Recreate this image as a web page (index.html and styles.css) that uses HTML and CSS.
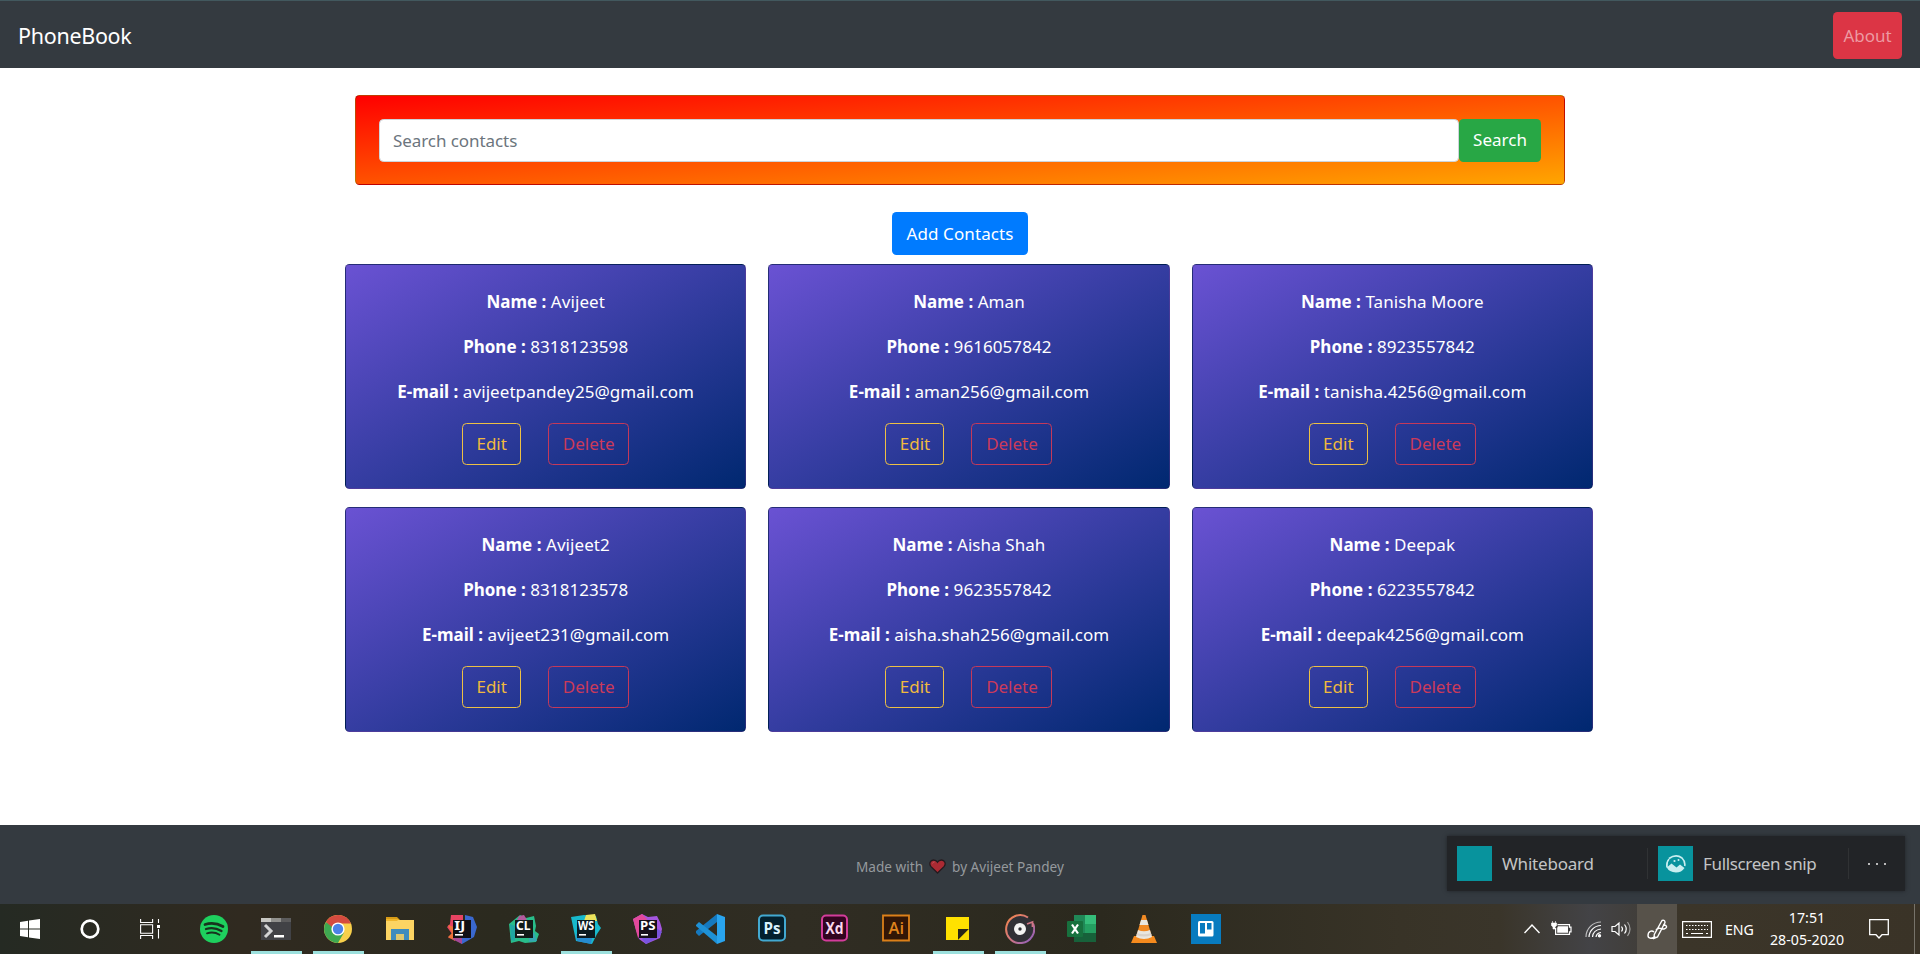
FILE: index.html
```
<!DOCTYPE html>
<html lang="en">
<head>
<meta charset="utf-8">
<title>PhoneBook</title>
<link rel="stylesheet" href="styles.css">
</head>
<body>
<nav class="navbar">
  <a class="brand">PhoneBook</a>
  <a class="about">About</a>
</nav>
<main class="main">
  <form class="search-card">
    <input class="search-input" type="text" placeholder="Search contacts">
    <button class="btn btn-search" type="button">Search</button>
  </form>
  <button class="btn btn-add" type="button">Add Contacts</button>
  <section class="contacts">
    <article class="card">
      <p><b>Name :</b> Avijeet</p><p><b>Phone :</b> 8318123598</p><p><b>E-mail :</b> avijeetpandey25@gmail.com</p>
      <div class="actions"><button class="btn edit">Edit</button><button class="btn delete">Delete</button></div>
    </article>
    <article class="card">
      <p><b>Name :</b> Aman</p><p><b>Phone :</b> 9616057842</p><p><b>E-mail :</b> aman256@gmail.com</p>
      <div class="actions"><button class="btn edit">Edit</button><button class="btn delete">Delete</button></div>
    </article>
    <article class="card">
      <p><b>Name :</b> Tanisha Moore</p><p><b>Phone :</b> 8923557842</p><p><b>E-mail :</b> tanisha.4256@gmail.com</p>
      <div class="actions"><button class="btn edit">Edit</button><button class="btn delete">Delete</button></div>
    </article>
    <article class="card">
      <p><b>Name :</b> Avijeet2</p><p><b>Phone :</b> 8318123578</p><p><b>E-mail :</b> avijeet231@gmail.com</p>
      <div class="actions"><button class="btn edit">Edit</button><button class="btn delete">Delete</button></div>
    </article>
    <article class="card">
      <p><b>Name :</b> Aisha Shah</p><p><b>Phone :</b> 9623557842</p><p><b>E-mail :</b> aisha.shah256@gmail.com</p>
      <div class="actions"><button class="btn edit">Edit</button><button class="btn delete">Delete</button></div>
    </article>
    <article class="card">
      <p><b>Name :</b> Deepak</p><p><b>Phone :</b> 6223557842</p><p><b>E-mail :</b> deepak4256@gmail.com</p>
      <div class="actions"><button class="btn edit">Edit</button><button class="btn delete">Delete</button></div>
    </article>
  </section>
</main>
<footer class="footer">
  <span>Made with</span>
  <svg class="heart" width="17" height="15" viewBox="0 0 17 15"><path d="M8.5 14 2 7.6C-.4 4.6 1.3 1 4.5 1c1.800 0 3.200.8 4 2.200C9.300 1.800 10.700 1 12.500 1c3.200 0 4.900 3.600 2.500 6.600z" fill="#ab2a33" stroke="#251a1e" stroke-width="1.300"/><path d="M3.500 4.500q.5-1.500 2-1.600" stroke="#c8565c" fill="none"/></svg>
  <span>by Avijeet Pandey</span>
  <aside class="ink-popup">
    <div class="ink-item ink-first"><span class="tile"></span><span>Whiteboard</span></div>
    <div class="ink-item ink-second"><span class="tile"><svg width="20" height="18" viewBox="0 0 20 18"><path d="M3 3.500Q10-1.500 16 3q3.500 3.500 2.700 8" fill="none" stroke="#c8eef0" stroke-width="1.600"/><path d="M2.500 4.500Q-1 8 .8 12.500L5.500 8.500l5 4 3.500-3 4.500 3.500q-3 4.500-8.500 4.500-7-.5-9.200-5" fill="#c8eef0"/><path d="M3 4Q0 7.500 1.200 12.500" fill="none" stroke="#c8eef0" stroke-width="1.600"/><circle cx="8.500" cy="6" r="1.100" fill="#c8eef0"/><circle cx="12.500" cy="5" r="1" fill="#c8eef0"/></svg></span><span>Fullscreen snip</span></div>
    <div class="ink-more"><i></i><i></i><i></i></div>
  </aside>
</footer>
<div class="taskbar">
  <div class="system">
    <span><svg width="20" height="20" viewBox="0 0 20 20"><path fill="#fff" d="M0 3l8-1.200V9.500H0zM9 1.600 20 0v9.500H9zM0 10.500h8v7.700L0 17zM9 10.500h11V20L9 18.400z"/></svg></span>
    <span><svg width="20" height="20" viewBox="0 0 20 20"><circle cx="10" cy="10" r="8.300" fill="none" stroke="#fff" stroke-width="2.700"/></svg></span>
    <span><svg width="20" height="20" viewBox="0 0 20 20" fill="none" stroke="#fff" stroke-width="1.100"><path d="M.6 0v3.500h12V0M.6 20v-3.500h12V20M.6 5.800h12v8.400H.6zM18.500 0v4M18.500 10v9.500"/><path d="M17 6h3v3h-3z" fill="#fff" stroke="none"/></svg></span>
  </div>
  <div class="apps">
    <span><svg width="30" height="30" viewBox="0 0 30 30"><circle cx="15" cy="15" r="14" fill="#1ed05e"/><g fill="none" stroke="#17331e" stroke-linecap="round"><path d="M6 10.500q9-3 18 2" stroke-width="2.700"/><path d="M7 15q8-2.500 15.500 2" stroke-width="2.300"/><path d="M8 19.300q7-2 12.500 1.500" stroke-width="1.900"/></g></svg></span>
    <span class="open"><svg width="30" height="30" viewBox="0 0 30 30"><path fill="#414246" d="M0 4h30v22H0z"/><path fill="#5b5b5c" d="M0 4h30v4H0z"/><path fill="#c7c7c3" d="M0 4h10v4H0z"/><path fill="#91918e" d="M10 4h10v4H10z"/><path d="m4 11 6 6-6 6" fill="none" stroke="#d2d3d4" stroke-width="3"/><path d="M13 21h10v2.500H13z" fill="#fff"/></svg></span>
    <span class="open"><svg width="30" height="30" viewBox="0 0 30 30"><circle cx="15" cy="15" r="14" fill="#f8d04b"/><path d="M15 15 2.900 8A14 14 0 0 0 15 29l6-10.500z" fill="#3ea851"/><path d="M2.900 8A14 14 0 0 1 28 9.500H15L9 13z" fill="#d54b3f"/><circle cx="15" cy="15" r="6.600" fill="#fff"/><circle cx="15" cy="15" r="5.200" fill="#4c82e8"/></svg></span>
    <span><svg width="30" height="30" viewBox="0 0 30 30"><path d="M1 3h11l3 3H1z" fill="#d79b16"/><path d="M1 6h28v20H1z" fill="#fcd463"/><path d="M1 5h13l-2 2H1z" fill="#f0b62c"/><path d="M6 26V15h18v11h-5v-6h-8v6z" fill="#3d8cbd"/><path d="M11 26v-6h8v6z" fill="#ddc86f"/></svg></span>
    <span><svg width="30" height="30" viewBox="0 0 30 30"><path d="M4 1h12v25L1 24l4-4-5-7 3-3z" fill="#e74462"/><path d="m1 11 9 3-2 13-7-4 4-4z" fill="#ee743b"/><path d="m18 1 8 2 4 10-3 10-12 7-6-4 9-8z" fill="#3a68cf"/><path d="m5 25 10-4v9z" fill="#a54897"/><path d="M6 6h18v18H6z" fill="#111014"/><text x="7.300" y="16" class="jb" textLength="11" lengthAdjust="spacingAndGlyphs">IJ</text><path d="M8 20h8v1.600H8z" fill="#fff"/></svg></span>
    <span><svg width="30" height="30" viewBox="0 0 30 30"><path d="m0 10 11-9 6 3 8-2 2 10-1 5 4 3-3 8-11 1-6-2-8 2z" fill="#29bd8a"/><path d="m10 2 5-1 3 5H8z" fill="#b35a9c"/><path d="m1 10 5 2v15l-4-1z" fill="#20a7a2"/><path d="m20 24 5-6 3 9-8 1z" fill="#35a6b2"/><path d="M6 6h18v18H6z" fill="#111b19"/><text x="7" y="16" class="jb" textLength="14.500" lengthAdjust="spacingAndGlyphs">CL</text><path d="M8 20h7v1.600H8z" fill="#fff"/></svg></span>
    <span class="open"><svg width="30" height="30" viewBox="0 0 30 30"><path d="m0 3 13-2 12 1 2 8 3 4-4 6-5 10-16-3z" fill="#18b9cc"/><path d="m15 1 9-1 2 7H13z" fill="#ece35b"/><path d="m5 20 16 4-1 6-14-3z" fill="#268bd0"/><path d="M6 6h18v18H6z" fill="#0b1a20"/><text x="7" y="16" class="jb" textLength="16" lengthAdjust="spacingAndGlyphs">WS</text><path d="M8 20h7v1.600H8z" fill="#fff"/></svg></span>
    <span><svg width="30" height="30" viewBox="0 0 30 30"><path d="m0 5 9-5 6 3 9-1 3 6 2 7-2 9-14 6-7-5-3-9z" fill="#a456df"/><path d="m0 5 9-5 5 5-9 19z" fill="#e3499c"/><path d="m22 13 7 5-3 5-13 7-4-5z" fill="#7954df"/><path d="M6 6h18v18H6z" fill="#161019"/><text x="7" y="16" class="jb" textLength="15.500" lengthAdjust="spacingAndGlyphs">PS</text><path d="M8 20h7v1.600H8z" fill="#fff"/></svg></span>
    <span><svg width="30" height="30" viewBox="0 0 30 30"><path d="m22 0 8 3v24l-8 3z" fill="#29a4ee"/><path d="M22 0v8L4 22l-3-3v-2z" fill="#1579bf"/><path d="m4 8 18 14v8L1 12v-1z" fill="#1e91d6"/></svg></span>
    <span><svg width="30" height="30" viewBox="0 0 30 30"><rect x="2" y="1.500" width="26" height="25" rx="4" fill="#03202e" stroke="#42a9d1" stroke-width="2"/><text x="6.500" y="19.500" class="adobe" fill="#d9f2fd" textLength="17" lengthAdjust="spacingAndGlyphs">Ps</text></svg></span>
    <span><svg width="30" height="30" viewBox="0 0 30 30"><rect x="3" y="1.500" width="25" height="25" rx="4" fill="#330420" stroke="#d43c9b" stroke-width="2"/><text x="6.500" y="19.500" class="adobe" fill="#fbd7ee" textLength="18" lengthAdjust="spacingAndGlyphs">Xd</text></svg></span>
    <span><svg width="30" height="30" viewBox="0 0 30 30"><path d="M2 1.500h26v25H2z" fill="#321606" stroke="#dc8019" stroke-width="1.800"/><text x="7.500" y="19.500" class="adobe adobe-ai" fill="#df831d" textLength="15.500" lengthAdjust="spacingAndGlyphs">Ai</text></svg></span>
    <span class="open"><svg width="30" height="30" viewBox="0 0 30 30"><path d="M3 3h23v12L15 26H3z" fill="#ffe100"/><path d="M26 15H15v11z" fill="#272619"/><path d="M26 15v11H15z" fill="#f7db00"/></svg></span>
    <span class="open"><svg width="30" height="30" viewBox="0 0 30 30"><defs><linearGradient id="ring" x1="0" y1="0" x2="1" y2="1"><stop offset="0" stop-color="#f48649"/><stop offset=".5" stop-color="#d3777f"/><stop offset="1" stop-color="#855bc5"/></linearGradient></defs><circle cx="15" cy="15" r="14" fill="#303036"/><path d="M23 3.500A14 14 0 1 0 28 9.500" fill="none" stroke="url(#ring)" stroke-width="2"/><path d="m22 10 5.500-2v5" fill="none" stroke="#cf7584" stroke-width="1.800"/><circle cx="15" cy="15" r="6" fill="#f3f3f3"/><circle cx="15" cy="15" r="1.700" fill="#303036"/></svg></span>
    <span><svg width="30" height="30" viewBox="0 0 30 30"><path d="M7 1h22v27H7z" fill="#208857"/><path d="M18 1h11v9H18z" fill="#35bd7a"/><path d="M18 10h11v9H18z" fill="#249f61"/><path d="M7 19h22v9H7z" fill="#17613a"/><rect y="7" width="16" height="16" rx="1" fill="#17713e"/><path d="m5 10.500 6 9m0-9-6 9" stroke="#fff" stroke-width="2.200"/></svg></span>
    <span><svg width="30" height="30" viewBox="0 0 30 30"><path d="M5 22h20l3 7H2z" fill="#f58a1d"/><path d="M13.500 1h3l6.500 22q-8 4-16 0z" fill="#f18a24"/><path d="m12 6-1.500 5h9L18 6zM9 16l-2 7q8 4 16 0l-2-7q-6 2.500-12 0z" fill="#e9e6df"/><path d="m8 19-.500 2q7.500 3 15 0l-.5-2q-7 2.500-14 0z" fill="#d9d2ca"/></svg></span>
    <span><svg width="30" height="30" viewBox="0 0 30 30"><path d="M0 0h30v30H0z" fill="#087bbf"/><rect x="7" y="7" width="15.500" height="15.500" rx="1.500" fill="#fff"/><path d="M9 9h5v10.500H9zM16 9h4.500v6.500H16z" fill="#087bbf"/></svg></span>
  </div>
  <div class="tray">
    <svg class="chevron" width="16" height="10" viewBox="0 0 16 10"><path d="m.5 9 7.500-8 7.500 8" fill="none" stroke="#fff" stroke-width="1.400"/></svg>
    <svg class="battery" width="21" height="16" viewBox="0 0 21 16"><path d="M6.500 3.600h12v2.600H20v4.600h-1.500v2.600H4.600V7" fill="none" stroke="#fff" stroke-width="1.200"/><path d="M7 5.200h10v6.600H6.200V7z" fill="#fff"/><path d="M1.500 0v2M4.500 0v2M.4 2h5.200v2.500L4 6v2H2V6L.4 4.500z" fill="#fff" stroke="#fff" stroke-width=".6"/></svg>
    <svg class="wifi" width="17" height="17" viewBox="0 0 17 17"><g fill="none" stroke="#fff" stroke-width="1.200"><path d="M1 16A15 15 0 0 1 16 1" opacity=".65"/><path d="M4 16A12 12 0 0 1 16 4.500M7.500 16Q8 9 16 8M11 16q.5-4 5-4.500"/></g><circle cx="14.500" cy="14.800" r="1.700" fill="#fff"/></svg>
    <svg class="sound" width="21" height="16" viewBox="0 0 21 16" fill="none" stroke="#fff" stroke-width="1.200"><path d="M1 5.500h3L8 2v12l-4-3.500H1zM10.500 5.500q2 2.500 0 5M13.500 3.500q3.500 4.500 0 9"/><path d="M16.500 1q5 7 0 14" opacity=".5"/></svg>
    <span class="ink"><svg width="21" height="21" viewBox="0 0 21 21" fill="none" stroke="#fff" stroke-width="1.400"><path d="M8 17c-2 3-7 3-7-.5C1 12 5 11 7 13M15 1.500q3-1 3 2L10.500 18 7 19.500l.3-4zM16 6c4-.5 5 3 1 4-4 .5-5-3-8 1"/></svg></span>
    <svg class="keyboard" width="30" height="17" viewBox="0 0 30 17" fill="none" stroke="#fff"><path d="M.6.6h28.800v15.800H.6z" stroke-width="1.200"/><path d="M4 4.500h22M4 8.500h22" stroke-dasharray="1.500 1.500"/><path d="M4 12.500h2m3 0h12m3 0h2" stroke-width="1.200"/></svg>
    <span class="lang">ENG</span>
    <div class="clock"><span>17:51</span><span>28-05-2020</span></div>
    <svg class="notice" width="20" height="20" viewBox="0 0 20 20"><path d="M.7.700h18.600v15H13L10 19l-3-3.300H.7z" fill="none" stroke="#fff" stroke-width="1.300"/></svg>
    <i class="desktop-edge"></i>
  </div>
</div>
</body>
</html>
```
FILE: styles.css
```
* { box-sizing: border-box; }
body {
  margin: 0;
  height: 954px;
  overflow: hidden;
  display: flex;
  flex-direction: column;
  background: #fff;
  font: 17px/27px "Noto Sans", "Open Sans", sans-serif;
  letter-spacing: -0.07px;
}
svg { display: block; flex: none; }
.navbar {
  height: 68px;
  flex: none;
  border-top: 1px solid #42585e;
  padding: 2px 18px 0;
  display: flex;
  align-items: center;
  justify-content: space-between;
  background: #343a40;
}
.brand { color: #fff; font-size: 21.5px; letter-spacing: -0.3px; }
.about {
  width: 69px;
  height: 47px;
  padding-bottom: 1px;
  border-radius: 4.5px;
  display: flex;
  align-items: center;
  justify-content: center;
  background: #dc3545;
  color: #ed9aa2;
}
.main {
  flex: 1;
  padding-top: 27px;
  display: flex;
  flex-direction: column;
  align-items: center;
}
.search-card {
  width: 1210px;
  height: 90px;
  margin: 0 0 27px;
  padding: 22.5px 23px;
  border: 1px solid rgba(0, 0, 0, .25);
  border-radius: 4.5px;
  display: flex;
  background: linear-gradient(to bottom right, red, orange);
}
.search-input {
  flex: 1;
  height: 43px;
  padding: 0 13px;
  border: 1px solid #ced4da;
  border-radius: 4.5px;
  background: #fff;
  font: inherit;
  letter-spacing: inherit;
}
.search-input::placeholder { color: #6c757d; opacity: 1; }
.btn {
  height: 43px;
  padding: 0 0 1px;
  border: 1px solid transparent;
  border-radius: 4.5px;
  font: inherit;
  letter-spacing: 0;
  color: #fff;
}
.btn-search { width: 82px; background: #28a745; }
.btn-add { width: 136px; background: #007bff; flex: none; letter-spacing: .1px; }
.contacts {
  width: 1248px;
  margin: 9px 0 0 18px;
  display: grid;
  grid-template-columns: repeat(3, 1fr);
  gap: 18px 22px;
}
.card {
  height: 225px;
  padding: 22.5px 0;
  border: 1px solid rgba(0, 0, 0, .25);
  border-radius: 4.5px;
  text-align: center;
  color: #fff;
  background: linear-gradient(to bottom right, #6a52d3, #002870);
}
.card p { margin: 0 0 18px; letter-spacing: .07px; }
.card b { letter-spacing: 0; }
.actions { display: flex; justify-content: center; gap: 27px; }
.edit { width: 59px; height: 42px; background: none; border-color: #edc044; color: #f0b93e; }
.delete { width: 81px; height: 42px; background: none; border-color: #c4395a; color: #cb3a5a; }
.footer {
  height: 79px;
  flex: none;
  padding-top: 3px;
  position: relative;
  display: flex;
  justify-content: center;
  align-items: center;
  gap: 6px;
  background: #343a40;
  color: #95999d;
  font-size: 13.600px;
  letter-spacing: 0;
}
.ink-popup {
  position: absolute;
  left: 1447px;
  top: 11px;
  width: 458px;
  height: 55px;
  display: flex;
  align-items: center;
  padding-left: 10px;
  background: #222427;
  box-shadow: 0 0 4px #202327;
  color: #c4c4c5;
  font-size: 17px;
  letter-spacing: -0.2px;
}
.ink-item { display: flex; align-items: center; gap: 10px; height: 31px; border-right: 1px solid #303234; }
.ink-first { width: 191px; margin-right: 10px; }
.ink-second { width: 191px; letter-spacing: -0.35px; }
.tile { width: 35px; height: 35px; display: grid; place-items: center; background: #08939d; }
.ink-more { display: flex; gap: 6px; margin-left: 19px; }
.ink-more i { width: 2px; height: 2px; background: #bbb; }
.taskbar {
  height: 50px;
  flex: none;
  display: flex;
  background: linear-gradient(90deg, #252a23 0, #302a20 240px, #2b2a1f 500px, #302d23 800px, #2b291e 1100px, #383327 1400px, #3a352a 1500px, #434346 1590px, #413e3a 1640px, #3b3529 1680px, #3a3327 100%);
}
.system { display: flex; }
.system span { width: 60px; display: grid; place-items: center; }
.apps { display: flex; margin-left: 3px; }
.apps span { width: 62px; display: grid; place-items: center; }
.open { background: linear-gradient(#9ce0dd, #9ce0dd) center bottom / 51px 3px no-repeat; }
.jb { font: 700 11.500px "Noto Sans", sans-serif; letter-spacing: 0; fill: #fff; }
.adobe { font: 700 16px "Open Sans", sans-serif; letter-spacing: 0; }
.adobe-ai { font-weight: 600; }
.tray { margin-left: auto; display: flex; align-items: center; color: #fff; font-size: 14.200px; }
.chevron { margin-right: 11px; }
.battery { margin-right: 13px; }
.wifi { margin-right: 9px; }
.sound { margin-right: 5px; }
.ink { width: 40px; height: 50px; display: grid; place-items: center; background: #57524a; margin-right: 5px; }
.keyboard { margin-right: 13px; }
.lang { width: 31px; }
.clock { width: 80px; margin: 0 1px 0 11px; display: flex; flex-direction: column; align-items: center; line-height: 22.500px; letter-spacing: 0; }
.notice { margin-left: 21px; }
.desktop-edge { width: 1px; height: 50px; margin: 0 5px 0 25px; background: #77736a; }
```
